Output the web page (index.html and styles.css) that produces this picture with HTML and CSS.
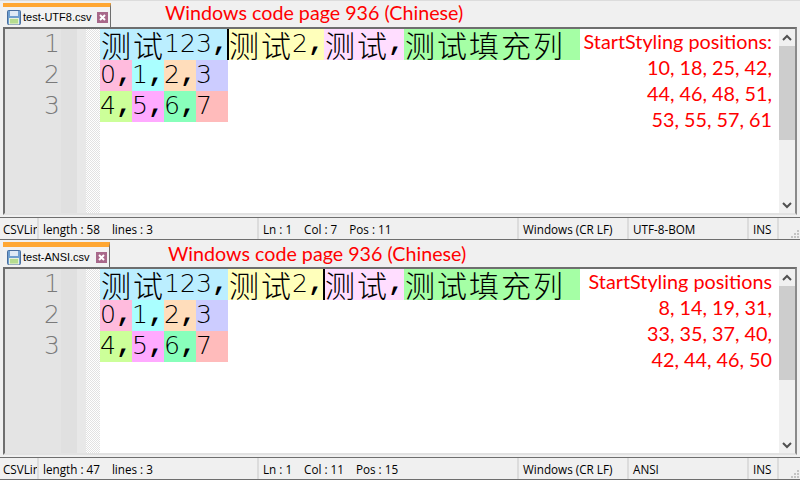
FILE: index.html
```html
<!DOCTYPE html>
<html lang="zh">
<head>
<meta charset="utf-8">
<title>CSVLint code pages</title>
<link rel="stylesheet" href="styles.css">
</head>
<body>
<section class="pane">
  <header class="tabbar">
    <div class="tab">
      <svg class="save" width="14" height="15" viewBox="0 0 14 15"><rect x=".5" y=".5" width="13" height="14" rx="1" fill="#6f9fd0" stroke="#4a6f9f"/><rect x="3" y="1" width="8" height="5" fill="#dfeaf5"/><rect x="2.500" y="8.500" width="9" height="5.500" fill="#b5dc8f" stroke="#e8f2dc"/></svg>
      <span class="tabname">test-UTF8.csv</span>
      <svg class="close" width="11" height="11" viewBox="0 0 11 11"><rect width="11" height="11" fill="#a8688a"/><path d="M3 3l5 5M8 3l-5 5" stroke="#fff" stroke-width="2"/></svg>
    </div>
    <div class="title title-a">Windows code page 936 (Chinese)</div>
  </header>
  <div class="editor">
    <div class="gutter">
      <div class="nums"><div class="num">1</div><div class="num">2</div><div class="num">3</div></div>
      <div class="m1"></div><div class="m2"></div><div class="fold"></div>
    </div>
    <div class="code">
      <div class="line">
        <span class="c1"><span class="han">测</span><span class="han">试</span>123<span class="comma">,</span></span><span class="c2 caret"><span class="han">测</span><span class="han">试</span>2<span class="comma">,</span></span><span class="c3"><span class="han">测</span><span class="han">试</span><span class="comma">,</span></span><span class="c4 tail"><span class="han">测</span><span class="han">试</span><span class="han">填</span><span class="han">充</span><span class="han">列</span></span>
      </div>
      <div class="line"><span class="c5">0<span class="comma">,</span></span><span class="c6">1<span class="comma">,</span></span><span class="c7">2<span class="comma">,</span></span><span class="c8 tail">3</span></div>
      <div class="line"><span class="c9">4<span class="comma">,</span></span><span class="c10">5<span class="comma">,</span></span><span class="c11">6<span class="comma">,</span></span><span class="c12 tail">7</span></div>
    </div>
    <div class="note">StartStyling positions:<br>10, 18, 25, 42,<br>44, 46, 48, 51,<br>53, 55, 57, 61</div>
    <div class="scroll">
      <div class="arrow"><svg width="12" height="8" viewBox="0 0 12 8"><path d="M2 6l4-4 4 4" fill="none" stroke="#505050" stroke-width="2"/></svg></div>
      <div class="track"><div class="thumb"></div></div>
      <div class="arrow"><svg width="12" height="8" viewBox="0 0 12 8"><path d="M2 2l4 4 4-4" fill="none" stroke="#505050" stroke-width="2"/></svg></div>
    </div>
  </div>
  <footer class="status">
    <div class="cell s-lang"><span class="clip">CSVLint</span></div>
    <div class="cell s-doc"><span class="gap">length : 58</span><span>lines : 3</span></div>
    <div class="cell s-pos"><span class="gap">Ln : 1</span><span class="gap">Col : 7</span><span>Pos : 11</span></div>
    <div class="cell s-eol">Windows (CR LF)</div>
    <div class="cell s-enc">UTF-8-BOM</div>
    <div class="cell s-ins">INS</div>
    <div class="cell s-grip"><svg width="10" height="10" viewBox="0 0 10 10"><path d="M7 1h2v2H7zM4 4h2v2H4zM7 4h2v2H7zM1 7h2v2H1zM4 7h2v2H4zM7 7h2v2H7z" fill="#c4c4c4"/></svg></div>
  </footer>
</section>
<section class="pane">
  <header class="tabbar tabbar-b">
    <div class="tab tab-b">
      <svg class="save" width="14" height="15" viewBox="0 0 14 15"><rect x=".5" y=".5" width="13" height="14" rx="1" fill="#6f9fd0" stroke="#4a6f9f"/><rect x="3" y="1" width="8" height="5" fill="#dfeaf5"/><rect x="2.500" y="8.500" width="9" height="5.500" fill="#b5dc8f" stroke="#e8f2dc"/></svg>
      <span class="tabname">test-ANSI.csv</span>
      <svg class="close" width="11" height="11" viewBox="0 0 11 11"><rect width="11" height="11" fill="#a8688a"/><path d="M3 3l5 5M8 3l-5 5" stroke="#fff" stroke-width="2"/></svg>
    </div>
    <div class="title title-b">Windows code page 936 (Chinese)</div>
  </header>
  <div class="editor">
    <div class="gutter">
      <div class="nums"><div class="num">1</div><div class="num">2</div><div class="num">3</div></div>
      <div class="m1"></div><div class="m2"></div><div class="fold"></div>
    </div>
    <div class="code">
      <div class="line">
        <span class="c1"><span class="han">测</span><span class="han">试</span>123<span class="comma">,</span></span><span class="c2"><span class="han">测</span><span class="han">试</span>2<span class="comma">,</span></span><span class="c3 caret"><span class="han">测</span><span class="han">试</span><span class="comma">,</span></span><span class="c4 tail"><span class="han">测</span><span class="han">试</span><span class="han">填</span><span class="han">充</span><span class="han">列</span></span>
      </div>
      <div class="line"><span class="c5">0<span class="comma">,</span></span><span class="c6">1<span class="comma">,</span></span><span class="c7">2<span class="comma">,</span></span><span class="c8 tail">3</span></div>
      <div class="line"><span class="c9">4<span class="comma">,</span></span><span class="c10">5<span class="comma">,</span></span><span class="c11">6<span class="comma">,</span></span><span class="c12 tail">7</span></div>
    </div>
    <div class="note">StartStyling positions<br>8, 14, 19, 31,<br>33, 35, 37, 40,<br>42, 44, 46, 50</div>
    <div class="scroll">
      <div class="arrow"><svg width="12" height="8" viewBox="0 0 12 8"><path d="M2 6l4-4 4 4" fill="none" stroke="#505050" stroke-width="2"/></svg></div>
      <div class="track"><div class="thumb"></div></div>
      <div class="arrow"><svg width="12" height="8" viewBox="0 0 12 8"><path d="M2 2l4 4 4-4" fill="none" stroke="#505050" stroke-width="2"/></svg></div>
    </div>
  </div>
  <footer class="status">
    <div class="cell s-lang"><span class="clip">CSVLint</span></div>
    <div class="cell s-doc"><span class="gap">length : 47</span><span>lines : 3</span></div>
    <div class="cell s-pos"><span class="gap">Ln : 1</span><span class="gap">Col : 11</span><span>Pos : 15</span></div>
    <div class="cell s-eol">Windows (CR LF)</div>
    <div class="cell s-enc">ANSI</div>
    <div class="cell s-ins">INS</div>
    <div class="cell s-grip"><svg width="10" height="10" viewBox="0 0 10 10"><path d="M7 1h2v2H7zM4 4h2v2H4zM7 4h2v2H7zM1 7h2v2H1zM4 7h2v2H4zM7 7h2v2H7z" fill="#c4c4c4"/></svg></div>
  </footer>
</section>
</body>
</html>
```
FILE: styles.css
```css
* { box-sizing: border-box; }
html, body { margin: 0; padding: 0; }
body { width: 800px; height: 480px; overflow: hidden; background: #f0f0f0; font-family: "Open Sans", "Liberation Sans", sans-serif; }
.pane { height: 240px; display: flex; flex-direction: column; }
.tabbar { flex: none; height: 27px; display: flex; align-items: flex-start; padding: 2px 0 0 3px; border-top: 1px solid #dcdcdc; background: #f0f0f0; }
.tabbar-b { padding-top: 2px; border-top: 0; }
.tab { flex: none; width: 108px; height: 24px; border-top: 4px solid #ffa733; border-right: 1px solid #6e6e6e; display: flex; align-items: center; padding-left: 4px; background: #f2f2f2; }
.tab-b { width: 107px; height: 25px; border-top-width: 5px; }
.save { flex: none; }
.tabname { font: 11px "Liberation Sans", sans-serif; color: #000; margin-left: 2px; white-space: nowrap; }
.close { flex: none; margin-left: 6px; }
.title { font: 19.7px/24px Lato, "Open Sans", sans-serif; color: #ff0000; white-space: nowrap; }
.title-a { margin: -2px 0 0 54px; }
.title-b { margin: 0 0 0 58px; }
.editor { flex: none; height: 188px; margin: 0 3px; display: flex; border-top: 2px solid #6e6e6e; border-left: 2px solid #6e6e6e; border-right: 2px solid #8a8a8a; border-bottom: 2px solid #e2e2e2; background: #fff; }
.gutter { flex: none; width: 95px; display: flex; background: #e4e4e4; }
.nums { width: 56px; background: #e4e4e4; }
.num { height: 31px; text-align: right; padding-right: 1px; font: 200 25px/29px "DejaVu Sans", sans-serif; color: #7a7a7a; }
.m1 { width: 16px; background: #e0e0e0; }
.m2 { width: 9px; background: #e8e8e8; }
.fold { width: 14px; background-color: #f4f4f4; background-image: repeating-conic-gradient(#e2e2e2 0 25%, #ffffff 0 50%); background-size: 2px 2px; }
.code { flex: 1; min-width: 0; }
.line { height: 31px; white-space: nowrap; display: flex; font: 200 25.16px/29px "DejaVu Sans", sans-serif; color: #000; }
.comma { display: inline-block; width: 16px; text-align: center; font: 700 26.67px/29px "Liberation Mono", monospace; vertical-align: top; }
.tail { padding-right: 16px; }
.han { display: inline-block; width: 32px; text-align: center; font: 300 30px/31px "Noto Sans CJK SC", sans-serif; vertical-align: top; }
.caret { box-shadow: inset 1px 0 0 #000, -1px 0 0 #000; }
.c1 { background: #bbeeff; } .c2 { background: #ffffbb; } .c3 { background: #ffddff; } .c4 { background: #a5ffa5; }
.c5 { background: #ffbbdd; } .c6 { background: #aaffff; } .c7 { background: #ffddbb; } .c8 { background: #ccccff; }
.c9 { background: #ccff99; } .c10 { background: #ffaaff; } .c11 { background: #88ffbb; } .c12 { background: #ffbbbb; }
.note { flex: none; padding: 0 7px 0 0; margin-top: -1px; text-align: right; font: 19.8px/26px Lato, "Open Sans", sans-serif; color: #ff0000; white-space: nowrap; }
.scroll { flex: none; width: 16px; display: flex; flex-direction: column; background: #f0f0f0; }
.arrow { flex: none; height: 17px; display: flex; align-items: center; justify-content: center; }
.track { flex: 1; }
.thumb { height: 94px; background: #cdcdcd; }
.status { flex: none; height: 23px; margin-top: 2px; display: flex; align-items: center; border-top: 1px solid #6e6e6e; border-bottom: 1px solid #6e6e6e; font: 11.7px "Open Sans", "Liberation Sans", sans-serif; color: #000; padding-left: 3px; }
.cell { flex: none; height: 100%; display: flex; align-items: center; border-right: 2px solid #dcdcdc; white-space: nowrap; overflow: hidden; padding-left: 4px; }
.s-lang { width: 36px; padding-left: 0; }
.s-doc { width: 220px; }
.s-pos { width: 260px; }
.s-eol { width: 110px; }
.s-enc { width: 120px; }
.s-ins { width: 30px; }
.s-grip { border-right: 0; flex: 1; padding: 0; align-items: flex-end; justify-content: flex-end; }
.gap { margin-right: 12px; }
.clip { display: block; width: 100%; overflow: hidden; }
```
